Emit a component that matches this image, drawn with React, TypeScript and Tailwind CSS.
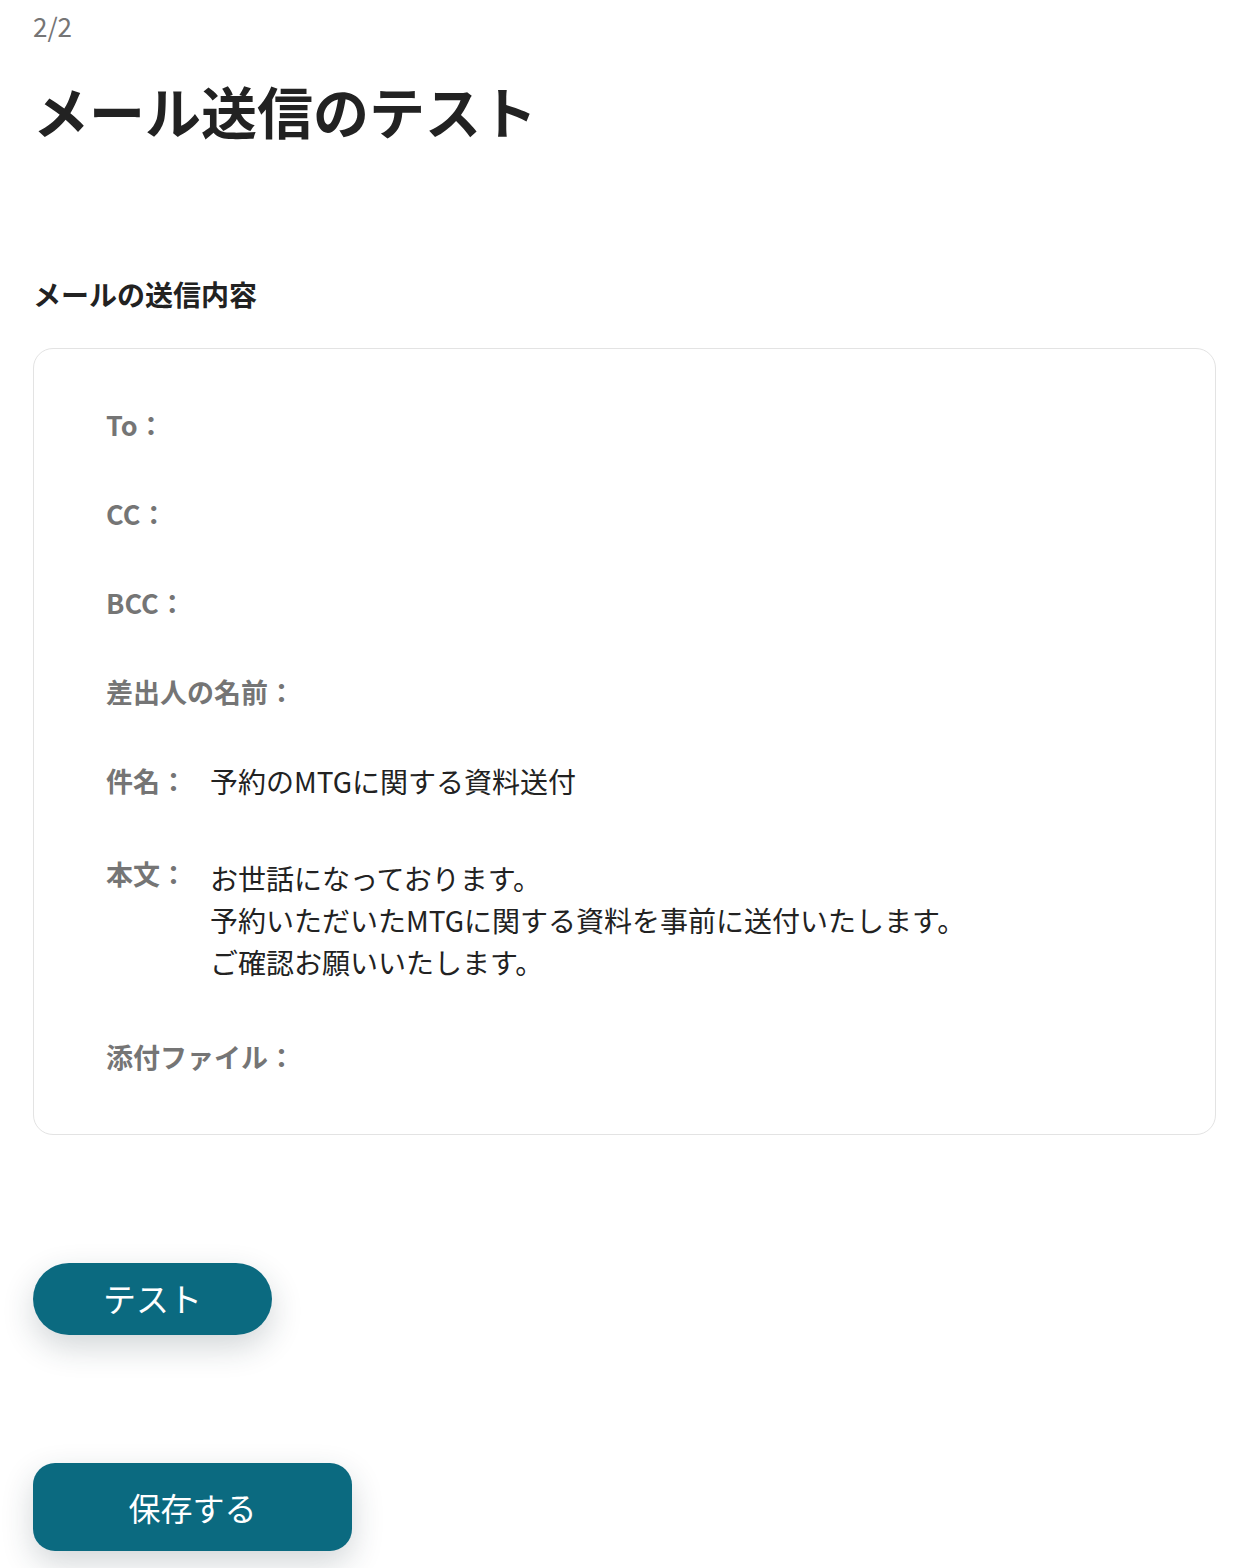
const FONT = { fontFamily: '"Noto Sans CJK JP", "Noto Sans", sans-serif' };

const rows: { label: string; value?: string[]; className?: string }[] = [
  { label: 'To：' },
  { label: 'CC：' },
  { label: 'BCC：' },
  { label: '差出人の名前：' },
  { label: '件名：', value: ['予約のMTGに関する資料送付'] },
  {
    label: '本文：',
    value: [
      'お世話になっております。',
      '予約いただいたMTGに関する資料を事前に送付いたします。',
      'ご確認お願いいたします。',
    ],
    className: 'mt-[8px]',
  },
  { label: '添付ファイル：', className: 'mt-[6px]' },
];

export default function App() {
  return (
    <div className="min-h-screen bg-white px-[33px] pb-[17px]" style={FONT}>
      <div className="pt-[8px] text-[26px] leading-[36px] text-[#757575]">2/2</div>

      <h1 className="mt-[24px] text-[56px] font-bold leading-[84px] text-[#222222]">メール送信のテスト</h1>

      <h2 className="mt-[121px] text-[28px] font-bold leading-[42px] text-[#222222]">メールの送信内容</h2>

      {/* Mail content card */}
      <div className="mt-[33px] w-[1183px] rounded-[20px] border border-[#e3e3e3] px-[72px] pt-[55px] pb-[56px]">
        <div className="flex flex-col gap-[47px]">
          {rows.map(r => (
            <div key={r.label} className={`flex items-start ${r.className ?? ''}`}>
              <div
                className={`shrink-0 whitespace-nowrap text-[27px] font-bold text-[#757575] ${
                  r.value ? 'w-[104px]' : ''
                } ${r.label === '本文：' ? 'leading-[34px]' : 'leading-[42px]'}`}
              >
                {r.label}
              </div>
              {r.value && (
                <div className="text-[28px] leading-[42px] text-[#222222]">
                  {r.value.map(line => (
                    <div key={line}>{line}</div>
                  ))}
                </div>
              )}
            </div>
          ))}
        </div>
      </div>

      <button className="mt-[128px] flex h-[72px] w-[239px] items-center justify-center rounded-full bg-[#0b6a80] text-[33px] text-white shadow-[0_12px_32px_rgba(30,50,60,0.2)]">
        テスト
      </button>

      <button className="mt-[128px] flex h-[88px] w-[319px] items-center justify-center rounded-[22px] bg-[#0b6a80] text-[32px] text-white shadow-[0_12px_32px_rgba(30,50,60,0.2)]">
        保存する
      </button>
    </div>
  );
}
